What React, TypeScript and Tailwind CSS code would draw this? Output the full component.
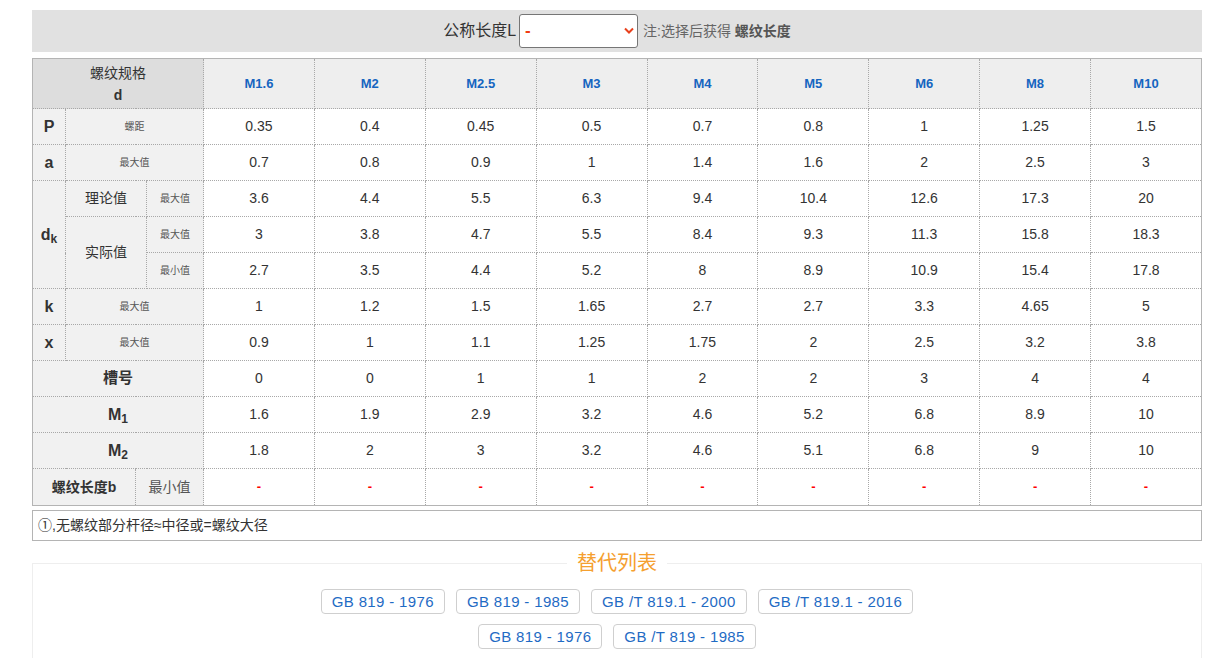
import React from 'react';

const sizes = ['M1.6', 'M2', 'M2.5', 'M3', 'M4', 'M5', 'M6', 'M8', 'M10'];

const data = {
  P: ['0.35', '0.4', '0.45', '0.5', '0.7', '0.8', '1', '1.25', '1.5'],
  a: ['0.7', '0.8', '0.9', '1', '1.4', '1.6', '2', '2.5', '3'],
  dkTheo: ['3.6', '4.4', '5.5', '6.3', '9.4', '10.4', '12.6', '17.3', '20'],
  dkMax: ['3', '3.8', '4.7', '5.5', '8.4', '9.3', '11.3', '15.8', '18.3'],
  dkMin: ['2.7', '3.5', '4.4', '5.2', '8', '8.9', '10.9', '15.4', '17.8'],
  k: ['1', '1.2', '1.5', '1.65', '2.7', '2.7', '3.3', '4.65', '5'],
  x: ['0.9', '1', '1.1', '1.25', '1.75', '2', '2.5', '3.2', '3.8'],
  slot: ['0', '0', '1', '1', '2', '2', '3', '4', '4'],
  m1: ['1.6', '1.9', '2.9', '3.2', '4.6', '5.2', '6.8', '8.9', '10'],
  m2: ['1.8', '2', '3', '3.2', '4.6', '5.1', '6.8', '9', '10'],
};

const cell = 'border border-dotted border-[#a8a8a8] text-center align-middle';
const label = `${cell} bg-[#f1f1f1] text-[#333]`;
const small = `${label} text-[10px] text-[#555]`;

function Values({ vals }: { vals: string[] }) {
  return (
    <>
      {vals.map((v, i) => (
        <td key={i} className={`${cell} bg-white text-[14px] text-[#333]`}>
          {v}
        </td>
      ))}
    </>
  );
}

const subs1 = ['GB 819 - 1976', 'GB 819 - 1985', 'GB /T 819.1 - 2000', 'GB /T 819.1 - 2016'];
const subs2 = ['GB 819 - 1976', 'GB /T 819 - 1985'];

function SubButton({ text }: { text: string }) {
  return (
    <button className="h-[25px] px-[10px] border border-[#cfcfcf] rounded-[4px] bg-white text-[15px] tracking-[0.35px] text-[#1f6bc4] leading-none">
      {text}
    </button>
  );
}

export default function App() {
  return (
    <div
      className="w-[1215px] min-h-[658px] bg-white pt-[10px] pl-[32px] pr-[13px]"
      style={{ fontFamily: '"Liberation Sans", Arial, "Noto Sans CJK SC", sans-serif' }}
    >
      <div className="h-[42px] bg-[#e1e1e1] flex items-center justify-center">
        <span className="text-[16px] text-[#333]">公称长度L</span>
        <div className="relative ml-[3px]">
          <select className="appearance-none w-[119px] h-[34px] border border-[#767676] rounded-[3px] bg-white pl-[5px] text-[17px] font-bold text-[#f03c14] outline-none">
            <option>-</option>
          </select>
          <svg
            className="absolute right-[4px] top-[13px] pointer-events-none"
            width="10"
            height="7"
            viewBox="0 0 10 7"
          >
            <path d="M1 1.5 L5 5.5 L9 1.5" fill="none" stroke="#e8401c" strokeWidth="2" />
          </svg>
        </div>
        <span className="ml-[5px] text-[14px] text-[#666]">
          注:选择后获得 <b className="text-[#555]">螺纹长度</b>
        </span>
      </div>

      <table className="mt-[6px] w-[1170px] border-collapse table-fixed border border-[#b4b4b4]">
        <colgroup>
          <col className="w-[33px]" />
          <col className="w-[70px]" />
          <col className="w-[11px]" />
          <col className="w-[57px]" />
          {sizes.map((s) => (
            <col key={s} />
          ))}
        </colgroup>
        <tbody>
          <tr className="h-[50px]">
            <td colSpan={4} className={`${cell} bg-[#dddddd] text-[14px] text-[#333] leading-[22px]`}>
              螺纹规格
              <br />
              <b>d</b>
            </td>
            {sizes.map((s) => (
              <td key={s} className={`${cell} bg-[#eeeeee] text-[13px] font-bold text-[#1565c0]`}>
                {s}
              </td>
            ))}
          </tr>
          <tr className="h-[36px]">
            <td className={`${label} text-[16px] font-bold`}>P</td>
            <td colSpan={3} className={small}>螺距</td>
            <Values vals={data.P} />
          </tr>
          <tr className="h-[36px]">
            <td className={`${label} text-[16px] font-bold`}>a</td>
            <td colSpan={3} className={small}>最大值</td>
            <Values vals={data.a} />
          </tr>
          <tr className="h-[36px]">
            <td rowSpan={3} className={`${label} text-[16px] font-bold`}>
              d<sub className="text-[12px]">k</sub>
            </td>
            <td colSpan={2} className={`${label} text-[14px]`}>理论值</td>
            <td className={small}>最大值</td>
            <Values vals={data.dkTheo} />
          </tr>
          <tr className="h-[36px]">
            <td rowSpan={2} colSpan={2} className={`${label} text-[14px]`}>实际值</td>
            <td className={small}>最大值</td>
            <Values vals={data.dkMax} />
          </tr>
          <tr className="h-[36px]">
            <td className={small}>最小值</td>
            <Values vals={data.dkMin} />
          </tr>
          <tr className="h-[36px]">
            <td className={`${label} text-[16px] font-bold`}>k</td>
            <td colSpan={3} className={small}>最大值</td>
            <Values vals={data.k} />
          </tr>
          <tr className="h-[36px]">
            <td className={`${label} text-[16px] font-bold`}>x</td>
            <td colSpan={3} className={small}>最大值</td>
            <Values vals={data.x} />
          </tr>
          <tr className="h-[36px]">
            <td colSpan={4} className={`${label} text-[15px] font-bold`}>槽号</td>
            <Values vals={data.slot} />
          </tr>
          <tr className="h-[36px]">
            <td colSpan={4} className={`${label} text-[16px] font-bold`}>
              M<sub className="text-[12px]">1</sub>
            </td>
            <Values vals={data.m1} />
          </tr>
          <tr className="h-[36px]">
            <td colSpan={4} className={`${label} text-[16px] font-bold`}>
              M<sub className="text-[12px]">2</sub>
            </td>
            <Values vals={data.m2} />
          </tr>
          <tr className="h-[37px]">
            <td colSpan={2} className={`${label} text-[14px] font-bold`}>螺纹长度b</td>
            <td colSpan={2} className={`${label} text-[14px] text-[#555]`}>最小值</td>
            {sizes.map((s) => (
              <td key={s} className={`${cell} bg-white text-[13px] font-bold text-[#ff0000]`}>
                -
              </td>
            ))}
          </tr>
        </tbody>
      </table>

      <div className="mt-[4px] h-[31px] border border-[#b4b4b4] flex items-center px-[5px] text-[14px] text-[#333]">
        ①,无螺纹部分杆径≈中径或=螺纹大径
      </div>

      <fieldset className="mt-[8px] border border-[#eeeeee] pb-[10px]">
        <legend className="mx-auto px-[10px] text-[20px] leading-[28px] text-[#f5a030]">替代列表</legend>
        <div className="mt-[12px] flex justify-center gap-[11px]">
          {subs1.map((s, i) => (
            <SubButton key={i} text={s} />
          ))}
        </div>
        <div className="mt-[10px] flex justify-center gap-[11px]">
          {subs2.map((s, i) => (
            <SubButton key={i} text={s} />
          ))}
        </div>
      </fieldset>
    </div>
  );
}
